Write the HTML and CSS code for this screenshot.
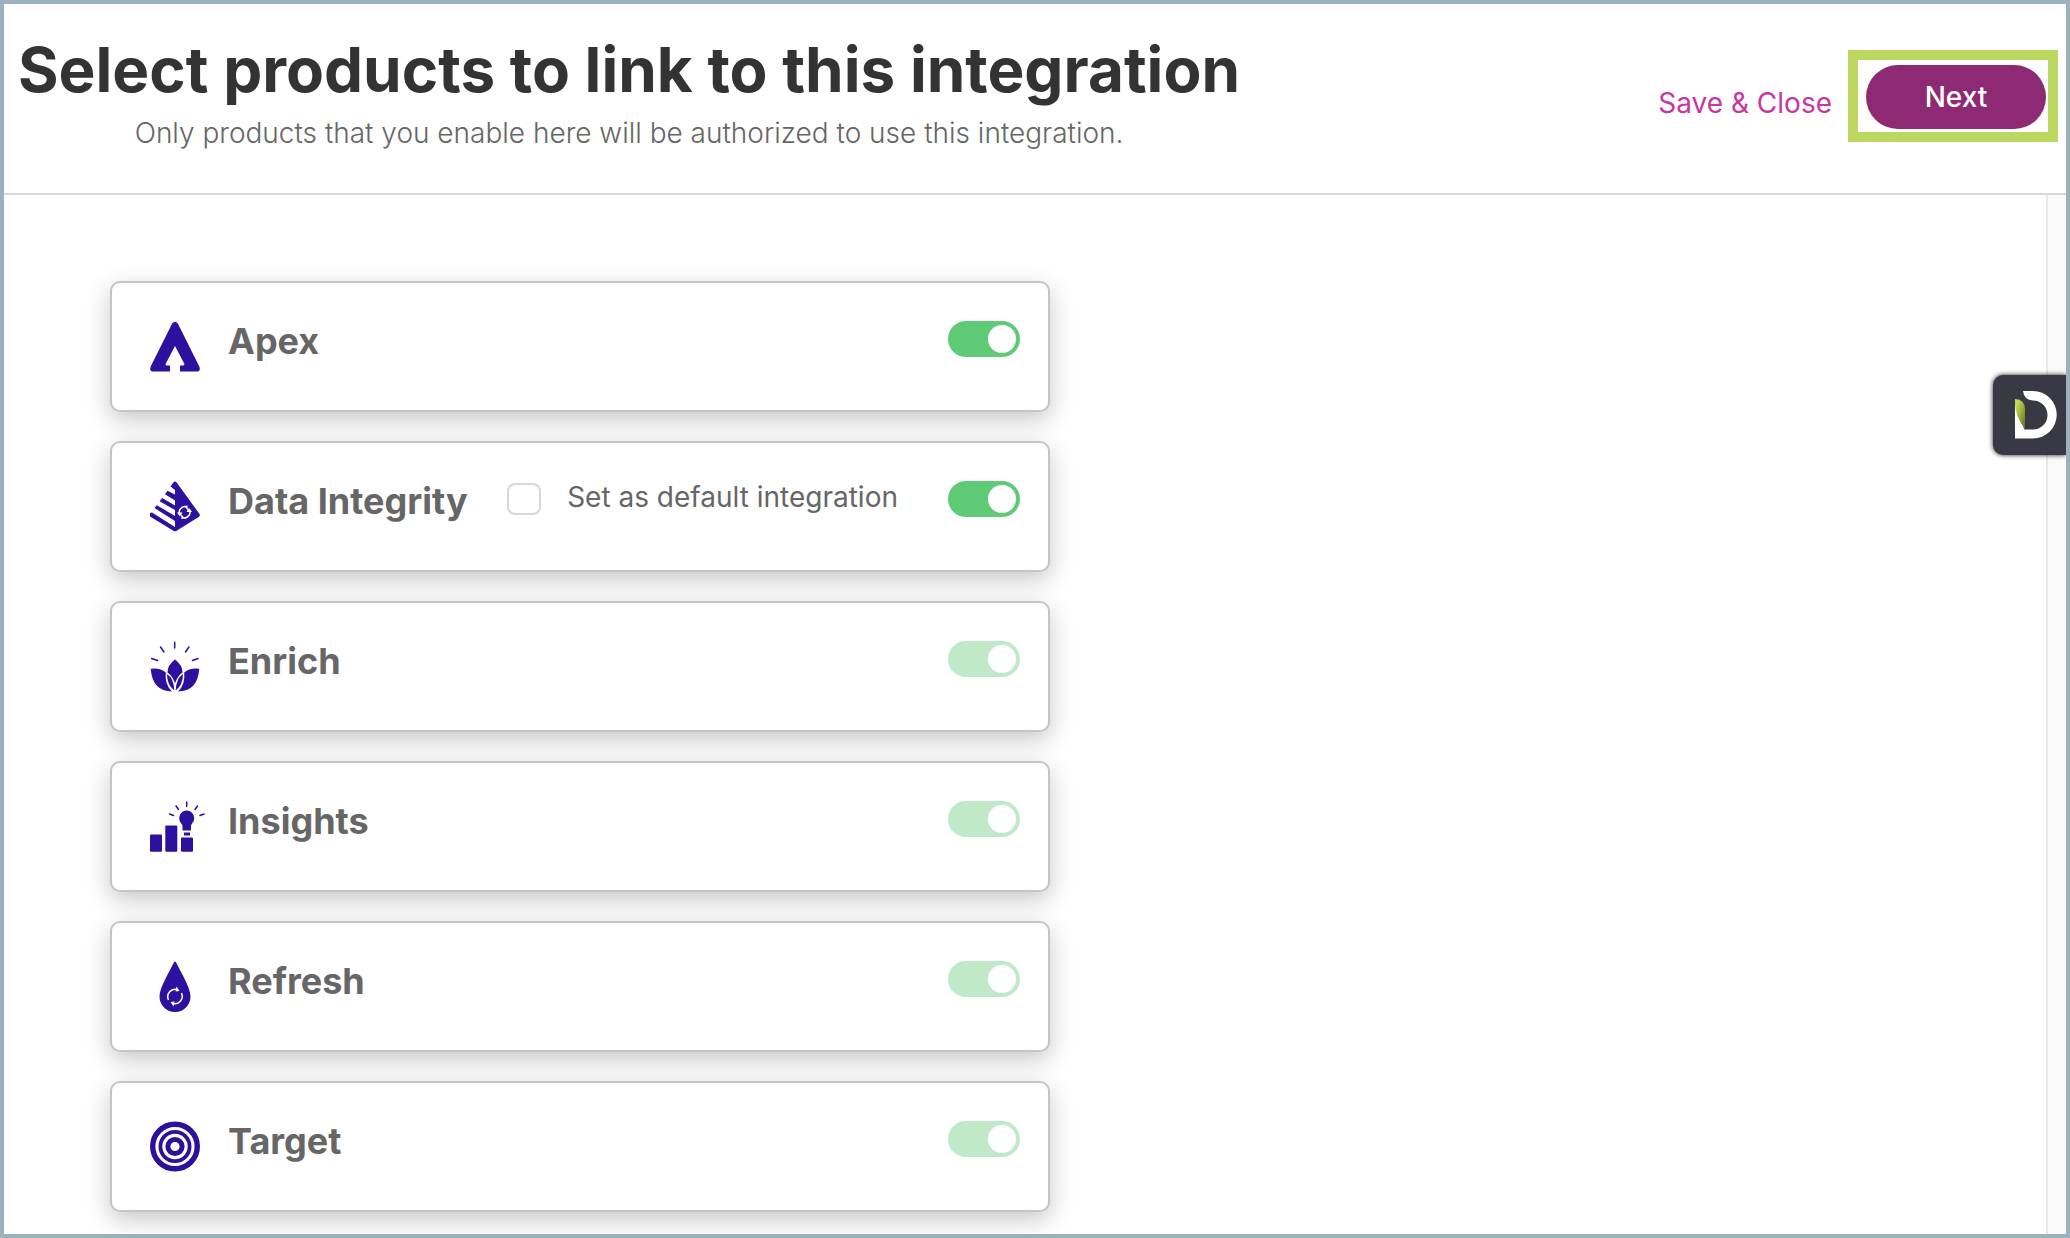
FILE: index.html
```html
<!DOCTYPE html>
<html lang="en">
<head>
<meta charset="utf-8">
<meta name="viewport" content="width=device-width, initial-scale=1">
<title>Select products to link to this integration</title>
<link rel="stylesheet" href="styles.css">
</head>
<body>
<div class="frame">
  <header class="header">
    <div class="heading">
      <h1 class="title">Select products to link to this integration</h1>
      <p class="subtitle">Only products that you enable here will be authorized to use this integration.</p>
    </div>
    <div class="actions">
      <a class="save" href="#">Save &amp; Close</a>
      <div class="highlight"><button class="next" type="button">Next</button></div>
    </div>
  </header>
  <div class="content">
    <main class="products">
      <section class="card">
        <svg class="icon" viewBox="0 0 50 50" aria-hidden="true">
          <path d="M22.300 1.800Q25-1.500 27.700 1.800L49.300 45Q51 49.200 47.500 50H30V44H33.500Q34.800 43.500 34.300 42.200L25 24.500L15.700 42.200Q15.200 43.500 16.500 44H20V50H2.500Q-1 49.200 .7 45Z"/>
        </svg>
        <h2 class="name">Apex</h2>
        <input class="toggle" type="checkbox" role="switch" aria-label="Apex" checked>
      </section>
      <section class="card">
        <svg class="icon" viewBox="0 0 50 50" aria-hidden="true">
          <path d="M23.500 .8Q25-.8 26.500 .8L49.500 32.500Q50.500 34.200 49 35.300L26.200 49.400Q25 50.200 23.800 49.400L0 35V31.500L2 31L25 45.500V39.500L4.500 26.500L6.800 23.700L25 34.500V28.500L9.600 19.800L12.200 16.600L25 24V19L15 12.700L17.600 9.300L25 13V8.500L20.500 5Z"/>
          <g class="arrows">
            <path d="M29.500 33A6 6 0 0 1 35 25M34 36.500A6 6 0 0 0 39.500 28"/>
            <path class="tip" d="M34 24.500L37.500 24L38 29Z M35 37L31.500 37.500L31 32.500Z"/>
            <path class="tip" d="M27 31H32.500L30 35Z M42 30.500H36.500L39 26.500Z"/>
          </g>
        </svg>
        <h2 class="name">Data Integrity</h2>
        <label class="default"><input class="box" type="checkbox">Set as default integration</label>
        <input class="toggle" type="checkbox" role="switch" aria-label="Data Integrity" checked>
      </section>
      <section class="card">
        <svg class="icon" viewBox="0 0 50 50" aria-hidden="true">
          <path d="M25 18Q32.500 23.500 32.500 31Q27 35 25 42Q23 35 17.500 31Q17.500 23.500 25 18Z"/>
          <path d="M.7 27.300Q10 26 15.800 31Q14.500 43 22 50Q2.500 50 .7 27.300Z"/>
          <path d="M49.300 27.300Q40 26 34.200 31Q35.500 43 28 50Q47.500 50 49.300 27.300Z"/>
          <path d="M17 32.500Q24 37 24.300 49Q17 43.500 17 32.500Z"/>
          <path d="M33 32.500Q26 37 25.700 49Q33 43.500 33 32.500Z"/>
          <path class="ray" d="M24.700 .8V6.500M10.500 5.500L14 10.500M39 5.500L35.500 10.500M1.700 17L7.500 19M48 17L42.500 19"/>
        </svg>
        <h2 class="name">Enrich</h2>
        <input class="toggle" type="checkbox" role="switch" aria-label="Enrich" checked disabled>
      </section>
      <section class="card">
        <svg class="icon" viewBox="0 0 50 50" aria-hidden="true">
          <rect x="0" y="33" width="12" height="17.300" rx="1"/>
          <rect x="15.300" y="24" width="12" height="26.300" rx="1"/>
          <rect x="31" y="36" width="12" height="14.300" rx="1"/>
          <path d="M29.200 16.500A7.500 7.500 0 0 1 44.200 16.500C44.200 21 41 22 41 25V29H32.500V25C32.500 22 29.200 21 29.200 16.500Z"/>
          <rect x="34" y="31" width="6" height="3"/>
          <path class="ray" d="M36.700 .5V5M26 4.500L28.500 8M47.500 4.500L45 8M19.500 12.500L23.500 14M54 12.500L50 14"/>
        </svg>
        <h2 class="name">Insights</h2>
        <input class="toggle" type="checkbox" role="switch" aria-label="Insights" checked disabled>
      </section>
      <section class="card">
        <svg class="icon" viewBox="0 0 50 50" aria-hidden="true">
          <path d="M24 .7Q25-.7 26 .7C31 11 40.500 26 40.500 35A15.500 15.500 0 0 1 9.500 35C9.500 26 19 11 24 .7Z"/>
          <g class="arrows">
            <path d="M18.500 38.500A7.500 7.500 0 0 1 27 28M31.500 31.500A7.500 7.500 0 0 1 23 42"/>
            <path class="tip" d="M26.500 25L29.500 29.500L25.500 30Z M23.500 45L20.500 40.500L24.500 40Z"/>
          </g>
        </svg>
        <h2 class="name">Refresh</h2>
        <input class="toggle" type="checkbox" role="switch" aria-label="Refresh" checked disabled>
      </section>
      <section class="card">
        <svg class="icon rings" viewBox="0 0 50 50" aria-hidden="true">
          <circle cx="25" cy="25" r="22.300" stroke-width="5.400"/>
          <circle cx="25" cy="25" r="14.600" stroke-width="3.800"/>
          <circle cx="25" cy="25" r="7.100" stroke-width="5"/>
        </svg>
        <h2 class="name">Target</h2>
        <input class="toggle" type="checkbox" role="switch" aria-label="Target" checked disabled>
      </section>
    </main>
    <div class="gutter"></div>
  </div>
  <button class="helper" type="button" aria-label="Open assistant">
    <svg class="logo" viewBox="0 0 42 48" aria-hidden="true">
      <defs>
        <linearGradient id="leaf" x1="0" y1="0" x2="1" y2="1">
          <stop offset="0.200" stop-color="#c3d94e"/>
          <stop offset="1" stop-color="#5f6b22"/>
        </linearGradient>
      </defs>
      <path class="shape" d="M8 0H18A23.700 23.700 0 0 1 18 47.500H0V12L9.500 38.500H18A14.300 14.300 0 0 0 18 9.500Q9 9 8 0Z"/>
      <path d="M0 8Q10 8.500 10 18V38.500Q0 24 0 13Z" fill="url(#leaf)"/>
    </svg>
  </button>
</div>
</body>
</html>
```
FILE: styles.css
```css
* {
  box-sizing: border-box;
}

body {
  margin: 0;
  background: #fff;
  color: #666;
  font-family: Inter, "Liberation Sans", sans-serif;
  font-size: 28px;
  line-height: 36px;
}

.frame {
  position: relative;
  display: flex;
  flex-direction: column;
  height: 100vh;
  border: 4px solid #9ab1be;
  overflow: hidden;
}

.header {
  display: flex;
  justify-content: space-between;
  align-items: flex-start;
  flex: none;
  padding: 28px 8px 42px 14px;
  border-bottom: 2px solid #d8d8d8;
}

.heading {
  text-align: center;
}

.title {
  margin: 0;
  color: #333;
  font-size: 62px;
  font-weight: 700;
  line-height: 75px;
}

.subtitle {
  margin: 8px 0 0;
  font-weight: 300;
}

.actions {
  display: flex;
  align-items: center;
  gap: 16px;
  padding-top: 18px;
}

.save {
  padding-top: 14px;
  color: #c6379f;
  text-decoration: none;
}

.highlight {
  padding: 5px 2px 3px 8px;
  border: 10px solid #bdd860;
}

.next {
  display: block;
  width: 180px;
  height: 64px;
  padding: 0;
  border: 0;
  border-radius: 32px;
  background: #8e2a74;
  color: #fff;
  font: inherit;
  font-weight: 500;
}

.content {
  display: flex;
  flex: 1;
  min-height: 0;
}

.products {
  display: flex;
  flex-direction: column;
  flex: 1;
  gap: 29px;
  padding: 86px 106px;
  overflow: hidden;
}

.gutter {
  width: 20px;
  border-left: 2px solid #e8e8e8;
  background: #fafafa;
}

.card {
  display: flex;
  flex: none;
  align-items: flex-start;
  width: 100%;
  max-width: 940px;
  height: 131px;
  padding: 38px 28px 38px 38px;
  border: 2px solid #c4c4c4;
  border-radius: 10px;
  background: #fff;
  box-shadow: 0 8px 24px rgba(0, 0, 0, 0.22);
}

.icon {
  flex: none;
  width: 50px;
  height: 51px;
  overflow: visible;
  fill: #2e109f;
}

.name {
  margin: 0 auto 0 28px;
  font-size: 36px;
  font-weight: 700;
  line-height: 40px;
}

.default {
  display: flex;
  gap: 26px;
  margin-right: 50px;
  line-height: 32px;
}

.box {
  appearance: none;
  width: 34px;
  height: 32px;
  margin: 2px 0 0;
  border: 2px solid #d8d8d8;
  border-radius: 8px;
  background: #fff;
}

.toggle {
  appearance: none;
  flex: none;
  width: 72px;
  height: 36px;
  margin: 0;
  border-radius: 18px;
  background: #5fcb77;
}

.toggle::before {
  content: "";
  display: block;
  width: 28px;
  height: 28px;
  margin: 4px 4px 4px auto;
  border-radius: 50%;
  background: #fff;
}

.toggle:disabled {
  background: #bfe9c9;
}

.ray {
  fill: none;
  stroke: #2e109f;
  stroke-width: 1.5;
  stroke-linecap: round;
}

.arrows {
  fill: none;
  stroke: #fff;
  stroke-width: 1.5;
}

.tip {
  fill: #fff;
  stroke: none;
}

.rings {
  fill: none;
  stroke: #2e109f;
}

.helper {
  position: absolute;
  top: 371px;
  right: 0;
  display: flex;
  align-items: center;
  width: 73px;
  height: 80px;
  padding: 0 0 0 22px;
  border: 0;
  border-radius: 10px 0 0 10px;
  background: #383943;
  box-shadow: 0 0 5px #222;
}

.logo {
  width: 42px;
  height: 48px;
}

.shape {
  fill: #fff;
}
```
